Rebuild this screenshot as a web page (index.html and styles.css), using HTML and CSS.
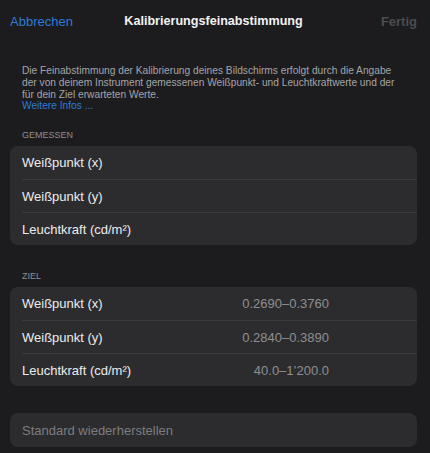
FILE: index.html
```html
<!DOCTYPE html>
<html lang="de">
<head>
<meta charset="utf-8">
<link rel="stylesheet" href="styles.css">
</head>
<body>
<div class="sheet">
  <header class="nav">
    <span class="nav-btn cancel">Abbrechen</span>
    <span class="nav-title">Kalibrierungsfeinabstimmung</span>
    <span class="nav-btn done">Fertig</span>
  </header>
  <p class="intro">Die Feinabstimmung der Kalibrierung deines Bildschirms erfolgt durch die Angabe<br>der von deinem Instrument gemessenen Weißpunkt- und Leuchtkraftwerte und der<br>für dein Ziel erwarteten Werte.<br><span class="link">Weitere Infos ...</span></p>

  <div class="section-label">GEMESSEN</div>
  <div class="card">
    <div class="row"><span class="label">Weißpunkt (x)</span></div>
    <div class="row"><span class="label">Weißpunkt (y)</span></div>
    <div class="row"><span class="label">Leuchtkraft (cd/m²)</span></div>
  </div>

  <div class="section-label ziel">ZIEL</div>
  <div class="card">
    <div class="row"><span class="label">Weißpunkt (x)</span><span class="value">0.2690–0.3760</span></div>
    <div class="row"><span class="label">Weißpunkt (y)</span><span class="value">0.2840–0.3890</span></div>
    <div class="row"><span class="label">Leuchtkraft (cd/m²)</span><span class="value">40.0–1’200.0</span></div>
  </div>

  <div class="card reset">
    <div class="row"><span class="label muted">Standard wiederherstellen</span></div>
  </div>
</div>
</body>
</html>
```
FILE: styles.css
```css
html, body {
  margin: 0;
  padding: 0;
  background: #1c1c1e;
}
body {
  font-family: "Liberation Sans", Arial, sans-serif;
  color: #ececee;
  width: 430px;
  height: 453px;
  overflow: hidden;
}
.sheet {
  padding: 0 13px 0 10px;
}
.nav {
  height: 42px;
  display: flex;
  align-items: center;
  justify-content: space-between;
}
.nav-btn {
  font-size: 13px;
  width: 80px;
}
.cancel {
  color: #2d7bd6;
}
.done {
  color: #4c4c50;
  text-align: right;
  font-weight: bold;
}
.nav-title {
  font-size: 12.6px;
  font-weight: bold;
  color: #f2f2f4;
}
.intro {
  margin: 23px 0 0 12px;
  font-size: 10.2px;
  line-height: 11.8px;
  color: #a4a4a8;
}
.link {
  color: #2d7bd6;
}
.section-label {
  margin: 18px 0 0 12px;
  font-size: 9px;
  line-height: 11px;
  color: #8e8e93;
  height: 11px;
}
.section-label.ziel {
  margin-top: 26px;
}
.card {
  margin-top: 5px;
  background: #2c2c2e;
  border-radius: 8px;
  overflow: hidden;
}
.row {
  height: 33px;
  margin-left: 12px;
  display: flex;
  align-items: center;
  justify-content: space-between;
  border-top: 1px solid #3a3a3c;
  box-sizing: border-box;
}
.row:first-child {
  border-top: none;
}
.label {
  font-size: 13px;
}
.value {
  font-size: 13px;
  color: #8e8e93;
  padding-right: 88px;
}
.reset {
  margin-top: 27px;
}
.reset .row {
  height: 34px;
}
.muted {
  color: #7c7c80;
}
```
